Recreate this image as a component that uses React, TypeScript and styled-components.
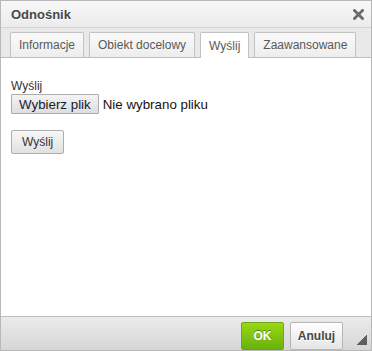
import { useState } from 'react'
import { styled, createGlobalStyle } from 'styled-components'

const GlobalStyle = createGlobalStyle`
  body {
    margin: 0;
    font-family: 'Liberation Sans', Arial, sans-serif;
    background: #fff;
  }
`

const Dialog = styled.div`
  position: relative;
  width: 372px;
  height: 351px;
  box-sizing: border-box;
  border: 1px solid #b8b8b8;
  display: flex;
  flex-direction: column;
  background: #e9e9e9;
`

const TitleBar = styled.div`
  height: 28px;
  border-bottom: 1px solid #d4d4d4;
  background: linear-gradient(#f8f8f8, #ebebeb);
  display: flex;
  align-items: center;
  justify-content: space-between;
  padding: 0 7px 0 10px;
`

const Title = styled.div`
  font-size: 13px;
  font-weight: 700;
  color: #474747;
  text-shadow: 0 1px 0 #fff;
`

const CloseButton = styled.button`
  width: 12px;
  height: 12px;
  padding: 0;
  border: none;
  background: none;
  display: flex;
  align-items: center;
  justify-content: center;
  cursor: pointer;
`

const TabStrip = styled.div`
  height: 29px;
  box-sizing: border-box;
  padding: 4px 0 0 9px;
  display: flex;
  align-items: flex-end;
  gap: 5px;
  background: #e9e9e9;
`

const Tab = styled.div<{ $active?: boolean }>`
  position: relative;
  z-index: 1;
  box-sizing: border-box;
  height: ${(p) => (p.$active ? '26px' : '25px')};
  margin-bottom: ${(p) => (p.$active ? '-1px' : '0')};
  padding: 0 8px;
  display: flex;
  align-items: center;
  font-size: 12px;
  color: #595959;
  border: 1px solid #c2c2c2;
  border-bottom: none;
  border-radius: 2px 2px 0 0;
  background: ${(p) => (p.$active ? '#fff' : 'linear-gradient(#fafafa, #ededed)')};
  cursor: pointer;
`

const Body = styled.div`
  height: 251px;
  border-top: 1px solid #bfbfbf;
  border-bottom: 1px solid #bfbfbf;
  background: #fff;
  padding: 21px 10px 0;
  box-sizing: content-box;
`

const FieldLabel = styled.div`
  font-size: 12px;
  line-height: 14px;
  color: #333;
  margin-bottom: 1px;
`

const FileRow = styled.div`
  display: flex;
  align-items: center;
  gap: 4px;
`

const FileButton = styled.button`
  height: 20px;
  padding: 0 7px;
  font-family: 'Liberation Sans', Arial, sans-serif;
  font-size: 13.33px;
  color: #1a1a2e;
  background: linear-gradient(#f4f4f4, #dedede);
  border: 1px solid #acacac;
  border-radius: 1px;
`

const FileStatus = styled.span`
  font-size: 13.33px;
  color: #1a1010;
`

const SendButton = styled.button`
  margin-top: 16px;
  height: 24px;
  padding: 0 10px;
  font-family: 'Liberation Sans', Arial, sans-serif;
  font-size: 12px;
  color: #333;
  background: linear-gradient(#f7f7f7, #e1e1e1);
  border: 1px solid #adadad;
  border-radius: 2px;
`

const Footer = styled.div`
  flex: 1;
  background: linear-gradient(#ebebeb, #d6d6d6);
  display: flex;
  justify-content: flex-end;
  align-items: flex-start;
  gap: 6px;
  padding: 5px 28px 0 0;
`

const FooterButton = styled.button<{ $primary?: boolean }>`
  height: 28px;
  box-sizing: border-box;
  width: ${(p) => (p.$primary ? '43px' : '53px')};
  padding: 0;
  font-family: 'Liberation Sans', Arial, sans-serif;
  font-size: 12px;
  font-weight: 700;
  color: ${(p) => (p.$primary ? '#fff' : '#474747')};
  text-shadow: ${(p) => (p.$primary ? '0 -1px 0 #55830c' : '0 1px 0 #fff')};
  background: ${(p) =>
    p.$primary ? 'linear-gradient(#9ad717, #69b10b)' : 'linear-gradient(#ffffff, #e4e4e4)'};
  border: 1px solid ${(p) => (p.$primary ? '#6aa815' : '#b6b6b6')};
  border-radius: 2px;
  cursor: pointer;
`

const ResizeGrip = styled.div`
  position: absolute;
  right: 4px;
  bottom: 5px;
  width: 10px;
  height: 10px;
  background: linear-gradient(135deg, transparent 50%, #5e5e5e 50%);
`

const tabs = ['Informacje', 'Obiekt docelowy', 'Wyślij', 'Zaawansowane']

function App() {
  const [active, setActive] = useState('Wyślij')

  return (
    <>
      <GlobalStyle />
      <Dialog>
        <TitleBar>
          <Title>Odnośnik</Title>
          <CloseButton aria-label="Zamknij">
            <svg width="11" height="11" viewBox="0 0 11 11">
              <path d="M1.5 1.5L9.5 9.5M9.5 1.5L1.5 9.5" stroke="#6b6b6b" strokeWidth="2.8" strokeLinecap="square" />
            </svg>
          </CloseButton>
        </TitleBar>
        <TabStrip>
          {tabs.map((t) => (
            <Tab key={t} $active={t === active} onClick={() => setActive(t)}>
              {t}
            </Tab>
          ))}
        </TabStrip>
        <Body>
          <FieldLabel>Wyślij</FieldLabel>
          <FileRow>
            <FileButton>Wybierz plik</FileButton>
            <FileStatus>Nie wybrano pliku</FileStatus>
          </FileRow>
          <SendButton>Wyślij</SendButton>
        </Body>
        <Footer>
          <FooterButton $primary>OK</FooterButton>
          <FooterButton>Anuluj</FooterButton>
        </Footer>
        <ResizeGrip />
      </Dialog>
    </>
  )
}

export default App
